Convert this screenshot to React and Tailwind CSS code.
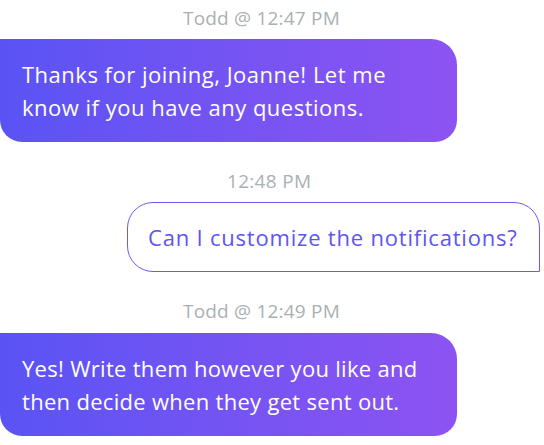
export default function App() {
  return (
    <div className="h-[445px] w-[544px] overflow-hidden bg-white" style={{ fontFamily: "'Open Sans', 'Noto Sans', sans-serif" }}>
      <div className="pt-[7px]">
        <div className="pl-[183px] text-[19px] leading-[22px] tracking-[0.2px] text-[#a9b1b3]">Todd @ 12:47 PM</div>
        <div className="mt-[10px] flex h-[103px] w-[457px] items-center rounded-tr-[26px] rounded-br-[22px] rounded-bl-[22px] bg-gradient-to-r from-[#5a53f4] to-[#8c53f2] px-[22px] text-[22px] leading-[33px] tracking-[0.5px] text-white">
          <p>Thanks for joining, Joanne! Let me<br />know if you have any questions.</p>
        </div>

        <div className="mt-[28px] pl-[227px] text-[19px] leading-[22px] tracking-[0.3px] text-[#a9b1b3]">12:48 PM</div>
        <div className="mt-[10px] flex justify-end pr-[4px]">
          <div className="flex h-[70px] w-[413px] items-center whitespace-nowrap rounded-tl-[26px] rounded-tr-[26px] rounded-bl-[26px] border-[1.5px] border-[#7059f3] pl-[20px] text-[22px] leading-[33px] tracking-[0.8px] text-[#5d55f2]">
            Can I customize the notifications?
          </div>
        </div>

        <div className="mt-[28px] pl-[183px] text-[19px] leading-[22px] tracking-[0.2px] text-[#a9b1b3]">Todd @ 12:49 PM</div>
        <div className="mt-[11px] flex h-[103px] w-[457px] items-center rounded-tr-[26px] rounded-br-[22px] rounded-bl-[22px] bg-gradient-to-r from-[#5a53f4] to-[#8c53f2] px-[22px] text-[22px] leading-[33px] tracking-[0.3px] text-white">
          <p>Yes! Write them however you like and<br />then decide when they get sent out.</p>
        </div>
      </div>
    </div>
  );
}
